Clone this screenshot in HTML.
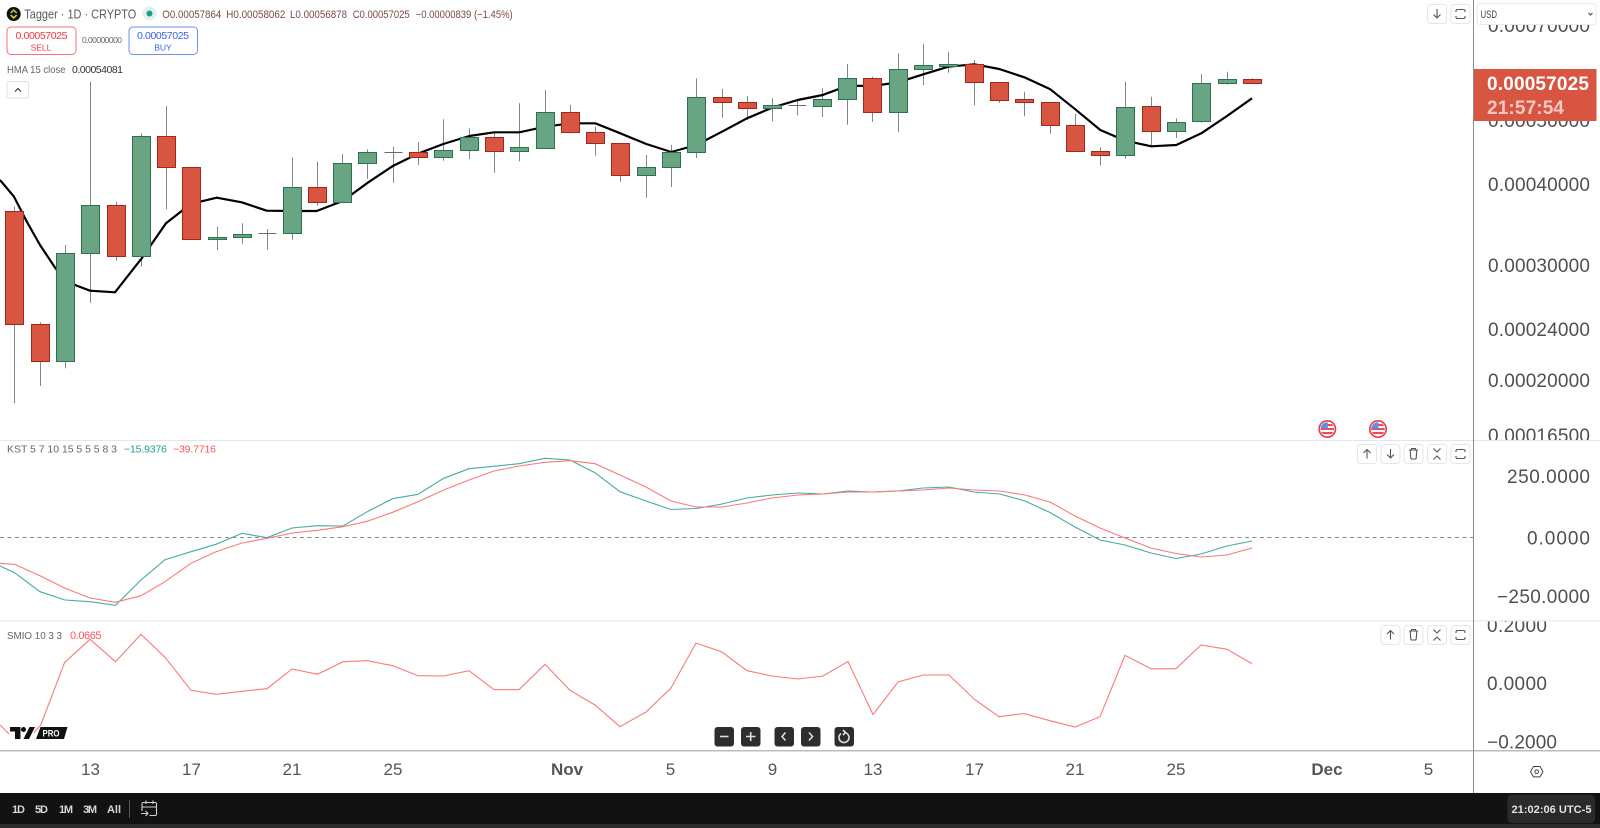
<!DOCTYPE html>
<html><head><meta charset="utf-8"><title>Tagger 1D</title>
<style>
html,body{margin:0;padding:0;background:#fff;width:1600px;height:828px;overflow:hidden}
svg{display:block;font-family:"Liberation Sans",sans-serif}
.w{stroke:#858585;stroke-width:1;fill:none}
.g rect{fill:#6aa583;stroke:#2a7350;stroke-width:1}
.r rect{fill:#d85542;stroke:#a3261b;stroke-width:1}
.ax{font-size:19px;fill:#505050}
.t{font-size:17px;fill:#555;text-anchor:middle}
.o{font-size:11px;fill:#7c4a44}
.ic{fill:none;stroke:#555;stroke-width:1.1}
.bb{fill:#fff;stroke:#e6e6e6;stroke-width:1}
.bt{font-size:11px;fill:#d6d6d6;font-weight:bold}
.nb{fill:#2d2d2d}
.ni{fill:none;stroke:#ddd;stroke-width:1.6}
</style></head><body>
<svg width="1600" height="828" viewBox="0 0 1600 828" xmlns="http://www.w3.org/2000/svg">
<defs>
<clipPath id="c1"><rect x="1474" y="25" width="126" height="415"/></clipPath>
<clipPath id="c2"><rect x="1474" y="441" width="126" height="179"/></clipPath>
<clipPath id="c3"><rect x="1474" y="621" width="126" height="129"/></clipPath>
<clipPath id="fl"><circle cx="0" cy="0" r="6.8"/></clipPath>
<g id="up"><rect class="bb" x=".5" y=".5" width="19" height="19" rx="3"/><path class="ic" d="M10 14.5V5.5M6.5 9L10 5.5 13.5 9"/></g>
<g id="dn"><rect class="bb" x=".5" y=".5" width="19" height="19" rx="3"/><path class="ic" d="M10 5V14M6.5 10.5L10 14l3.5-3.5"/></g>
<g id="tr"><rect class="bb" x=".5" y=".5" width="19" height="19" rx="3"/><path class="ic" d="M5.5 6h9M8 6V4.5h4V6M6.7 6l.6 8a1 1 0 0 0 1 1h3.4a1 1 0 0 0 1-1l.6-8"/></g>
<g id="co"><rect class="bb" x=".5" y=".5" width="19" height="19" rx="3"/><path class="ic" d="M6.5 4.5L10 8l3.5-3.5M6.5 15.5L10 12l3.5 3.5"/></g>
<g id="fs"><rect class="bb" x=".5" y=".5" width="19" height="19" rx="3"/><path class="ic" d="M5.5 8V7a1.5 1.5 0 0 1 1.5-1.5h6A1.5 1.5 0 0 1 14.500 7v1M5.500 12v1A1.500 1.500 0 0 0 7 14.500h6a1.500 1.500 0 0 0 1.500-1.500v-1"/></g>
<g id="flag"><circle r="8.2" fill="#fff" stroke="#f0364a" stroke-width="1.6"/><g clip-path="url(#fl)"><rect x="-7" y="-7" width="14" height="14" fill="#fff"/><rect x="-7" y="-1" width="14" height="2" fill="#ef4a55"/><rect x="-7" y="3" width="14" height="2" fill="#ef4a55"/><rect x="0" y="-5" width="7" height="2" fill="#ef4a55"/><rect x="-7" y="-7" width="7.500" height="6.500" fill="#5b8fe8"/></g></g>
</defs>

<!-- axis labels -->
<g clip-path="url(#c1)" class="ax">
<text x="1488" y="32" textLength="102">0.00070000</text>
<text x="1488" y="127" textLength="102">0.00050000</text>
<text x="1488" y="191" textLength="102">0.00040000</text>
<text x="1488" y="272" textLength="102">0.00030000</text>
<text x="1488" y="336" textLength="102">0.00024000</text>
<text x="1488" y="387" textLength="102">0.00020000</text>
<text x="1488" y="442" textLength="102">0.00016500</text>
</g>
<g clip-path="url(#c2)" class="ax">
<text x="1507" y="483" textLength="83">250.0000</text>
<text x="1527" y="544.500" textLength="63">0.0000</text>
<text x="1497" y="603" textLength="93">−250.0000</text>
</g>
<g clip-path="url(#c3)" class="ax">
<text x="1487" y="632" textLength="60">0.2000</text>
<text x="1487" y="690" textLength="60">0.0000</text>
<text x="1487" y="748.500" textLength="70">−0.2000</text>
</g>

<!-- wicks -->
<path class="w" d="M14.500 206.700V403.300M40.500 322.300V386M65.500 245V368.300M90.500 81.700V302.700M116.500 201.700V260.700M141.500 133.300V266.700M166.500 106V209.300M217.500 226.700V250.300M242.500 223.300V243.700M267.500 229V249.700M292.500 157.300V239.700M317.500 161.700V205.700M342.500 154V203M367.500 149.300V178.700M393.500 146.700V182.700M418.500 142.300V165M443.500 119.300V160.700M469.500 128.300V159M494.500 131.700V172.700M519.500 103.300V161.300M545.500 90V148M570.500 105V133.300M595.500 126.700V155.700M620.500 143V182M646.500 155V197.700M671.500 145V187M696.500 78.300V158M722.500 89V117.700M747.500 96V120M772.500 98.300V121.300M797.500 99.300V115.300M822.500 88.300V117M847.500 64V124.700M872.500 76.700V122M898.500 53.300V132M923.500 44V85M948.500 52V72.700M974.500 60V105.300M999.500 82V103M1024.500 91.700V116.300M1050.500 102V133.700M1075.500 114V151M1100.500 147.300V165.300M1125.500 81.700V158.700M1151.500 96.700V146.700M1176.500 118.300V138M1201.500 74V122.700M1227.500 71.700V84.700M1252.500 78.300V83"/>
<path d="M258.500 233.500h18M384.500 152.500h18M788.500 105.500h18" stroke="#6b6b6b" stroke-width="1" fill="none"/>

<!-- HMA underneath -->
<polyline fill="none" stroke="#000" stroke-width="2.200" stroke-linejoin="round" points="0,180 14,196.700 27,222 40,245 56,269 75,285 90,290.700 115,292.300 141.700,258.300 166,223.300 183,210 200,201.700 216.700,197.700 241.700,202.300 266.700,210.700 291.700,211 316.700,211 342.700,201 368.300,182.300 393.300,165.700 418.300,153.500 443.300,144 469.300,136 494.300,132.300 519.300,132.300 545.300,126.700 570.300,123.300 595.300,123.300 620.300,133.300 646.300,144 671.300,152 696.300,145 722,131.700 747,118.300 772,107.700 797.700,100 822.700,95 847.700,85.700 872.700,86 898.300,82.300 923.300,74.300 948.300,66.700 974.300,64.300 999.300,69 1024.300,77.300 1050.300,89.300 1075.300,109.300 1100.300,130 1125.300,140.700 1151.300,146.300 1176.300,145 1201.300,133.300 1227,116 1252,98.300"/>

<!-- green bodies -->
<g class="g">
<rect x="56.500" y="253.500" width="18" height="108"/>
<rect x="81.500" y="205.500" width="18" height="48"/>
<rect x="132.500" y="136.500" width="18" height="120"/>
<rect x="208.500" y="237.500" width="18" height="2"/>
<rect x="233.500" y="234.500" width="18" height="3"/>
<rect x="283.500" y="187.500" width="18" height="46"/>
<rect x="333.500" y="163.500" width="18" height="39"/>
<rect x="358.500" y="152.500" width="18" height="11"/>
<rect x="434.500" y="150.500" width="18" height="7"/>
<rect x="460.500" y="137.500" width="18" height="13"/>
<rect x="510.500" y="147.500" width="18" height="4"/>
<rect x="536.500" y="112.500" width="18" height="36"/>
<rect x="637.500" y="167.500" width="18" height="8"/>
<rect x="662.500" y="152.500" width="18" height="15"/>
<rect x="687.500" y="97.500" width="18" height="55"/>
<rect x="763.500" y="105.500" width="18" height="3"/>
<rect x="813.500" y="99.500" width="18" height="7"/>
<rect x="838.500" y="78.500" width="18" height="21"/>
<rect x="889.500" y="69.500" width="18" height="43"/>
<rect x="914.500" y="65.500" width="18" height="4"/>
<rect x="939.500" y="64.500" width="18" height="2"/>
<rect x="1116.500" y="107.500" width="18" height="48"/>
<rect x="1167.500" y="122.500" width="18" height="9"/>
<rect x="1192.500" y="83.500" width="18" height="38"/>
<rect x="1218.500" y="79.500" width="18" height="4"/>
</g>
<!-- red bodies -->
<g class="r">
<rect x="5.500" y="211.500" width="18" height="113"/>
<rect x="31.500" y="324.500" width="18" height="37"/>
<rect x="107.500" y="205.500" width="18" height="51"/>
<rect x="157.500" y="136.500" width="18" height="31"/>
<rect x="182.500" y="167.500" width="18" height="72"/>
<rect x="308.500" y="187.500" width="18" height="15"/>
<rect x="409.500" y="152.500" width="18" height="5"/>
<rect x="485.500" y="137.500" width="18" height="14"/>
<rect x="561.500" y="112.500" width="18" height="20"/>
<rect x="586.500" y="132.500" width="18" height="11"/>
<rect x="611.500" y="143.500" width="18" height="32"/>
<rect x="713.500" y="97.500" width="18" height="5"/>
<rect x="738.500" y="102.500" width="18" height="6"/>
<rect x="863.500" y="78.500" width="18" height="34"/>
<rect x="965.500" y="64.500" width="18" height="18"/>
<rect x="990.500" y="82.500" width="18" height="18"/>
<rect x="1015.500" y="99.500" width="18" height="3"/>
<rect x="1041.500" y="102.500" width="18" height="23"/>
<rect x="1066.500" y="125.500" width="18" height="26"/>
<rect x="1091.500" y="151.500" width="18" height="4"/>
<rect x="1142.500" y="106.500" width="18" height="25"/>
<rect x="1243.500" y="79.500" width="18" height="4"/>
</g>

<!-- flags -->
<use href="#flag" x="1327.300" y="429"/>
<use href="#flag" x="1378" y="429"/>

<!-- pane lines -->
<rect x="0" y="440" width="1600" height="1" fill="#e6e6ea"/>
<rect x="0" y="620" width="1600" height="1.500" fill="#eeeef2"/>
<rect x="0" y="750" width="1600" height="1.500" fill="#bcbcbc"/>
<rect x="1473" y="0" width="1" height="793" fill="#8a8a8a"/>

<!-- KST -->
<path d="M0 537.500H1473" stroke="#8a8a8a" stroke-width="1" stroke-dasharray="4 3.500" fill="none"/>
<polyline fill="none" stroke="#45aca0" stroke-width="1.100" points="0,566 14.500,572.700 40,591.700 65,600 90,601.700 115.500,605.300 141,580 165,559.700 191,551.700 216,544.300 242,533.300 267,537.700 292,528 317.500,525.700 343,526 367.300,511.700 392.600,498.700 418,494.300 443.700,478.300 469,468.700 494,466.300 519,463.700 545,458.300 570,460 595,472.700 620,491.700 646,501 671,509.500 696,508.500 722,504 747,498 772,495 798,493 823,494 848,491 873,492 898,491 923,488 949,487 974,492 1000,494 1025,501 1050,512.500 1075,527 1100,540 1125,545 1151,553 1176,558.500 1201,554 1227,546 1252,541"/>
<polyline fill="none" stroke="#fb7a78" stroke-width="1.100" points="0,563.300 14.500,564.300 40,575.700 65,588.300 90,598 115.500,602.300 141,595.700 165,581.700 191,563.300 216,551.700 242,543 267,538.300 292,533 317.500,530.300 343,526.700 367.300,521.300 392.600,512.300 418,501.700 443.700,490 469,480 494,471 519,466 545,462.300 570,460.700 595,463.700 620,475 646,487 671,501 696,507 722,507 747,503 772,498 798,495 823,494 848,492 873,492 898,491 923,490 949,488 974,490 1000,491 1025,495 1050,502 1075,516 1100,528 1125,538 1151,548 1176,553.500 1201,557 1227,555 1252,548"/>

<!-- SMIO -->
<polyline fill="none" stroke="#fb7a78" stroke-width="1.100" points="0,725 9,734 33,734 40.800,725 64.500,662.700 90,639.300 115.500,661.700 141,634.300 165,657.300 191,690.300 216,694.300 242,691.300 267,688.700 292,669 317.500,674.300 343,661.700 367.300,660.700 392.600,665.700 418,675.700 443.700,676 469,670.700 494,689.700 519,689.700 545,664.300 570,690.300 595,705 620,726.700 646,712 671,688 696,643 722,652 747,670.700 772,676 798,679 823,676 848,661.500 873,714.600 898,682 923,675 949,675 974,699 999,716.700 1024,713.600 1050,720.700 1075,727 1100,716.700 1125,655.400 1151,668.700 1176,668.700 1201,645 1227,649.300 1252,663.600"/>
<rect x="9" y="726" width="25" height="14" fill="#fff"/>

<!-- TV logo -->
<path d="M10 727h10.500v12H15v-7.500h-5z" fill="#111"/><circle cx="23.500" cy="729.500" r="2.500" fill="#111"/><path d="M29.500 727h5.500l-6 12h-5.500z" fill="#111"/>
<path d="M40.500 727h27l-3.500 12H36z" fill="#111"/>
<text x="42.500" y="736.500" font-size="9" font-weight="bold" fill="#fff" textLength="17" lengthAdjust="spacingAndGlyphs">PRO</text>

<!-- Legend -->
<circle cx="13.700" cy="14" r="7" fill="#111"/><path d="M10 12.500l3.700-3.500 3.700 3.500-1.300 1-2.400-2.300-2.400 2.300z" fill="#9ecb3c"/><path d="M10 15.500l3.700 3.500 3.700-3.500-1.300-1-2.400 2.300-2.400-2.300z" fill="#e7c53b"/>
<text x="24.300" y="18.500" font-size="13" fill="#5a5a5a" textLength="112" lengthAdjust="spacingAndGlyphs">Tagger · 1D · CRYPTO</text>
<circle cx="149.500" cy="13.500" r="7" fill="#dff2ef"/><circle cx="149.500" cy="13.500" r="3" fill="#1f9d8b"/>
<text class="o" x="162.300" y="18" textLength="59" lengthAdjust="spacingAndGlyphs">O0.00057864</text>
<text class="o" x="226.300" y="18" textLength="59" lengthAdjust="spacingAndGlyphs">H0.00058062</text>
<text class="o" x="290" y="18" textLength="57" lengthAdjust="spacingAndGlyphs">L0.00056878</text>
<text class="o" x="352.700" y="18" textLength="57" lengthAdjust="spacingAndGlyphs">C0.00057025</text>
<text class="o" x="415.700" y="18" textLength="97" lengthAdjust="spacingAndGlyphs">−0.00000839 (−1.45%)</text>

<rect x="7" y="27" width="69" height="27.500" rx="4" fill="#fff" stroke="#f4717b"/>
<text x="41.500" y="39" font-size="10.500" fill="#f23645" text-anchor="middle" textLength="52">0.00057025</text>
<text x="41" y="50.500" font-size="8.500" fill="#f23645" text-anchor="middle">SELL</text>
<text x="82" y="43" font-size="8.500" fill="#666" textLength="40">0.00000000</text>
<rect x="129" y="27" width="68.500" height="27.500" rx="4" fill="#fff" stroke="#6f8ff5"/>
<text x="163" y="39" font-size="10.500" fill="#3a62e6" text-anchor="middle" textLength="52">0.00057025</text>
<text x="163" y="50.500" font-size="8.500" fill="#3a62e6" text-anchor="middle">BUY</text>
<text x="7" y="73" font-size="10.500" fill="#666" textLength="58.500" lengthAdjust="spacingAndGlyphs">HMA 15 close</text>
<text x="72" y="73" font-size="10.500" fill="#333" textLength="51">0.00054081</text>
<rect x="7" y="81.500" width="21.500" height="16.500" rx="2" fill="#fff" stroke="#e2e2e2"/>
<path d="M15 91.500l3-3 3 3" fill="none" stroke="#333" stroke-width="1.100"/>

<text x="7" y="449.500" font-size="10.500" fill="#666" textLength="110" dy="3">KST 5 7 10 15 5 5 5 8 3</text>
<text x="124" y="452.500" font-size="10.500" fill="#1f9d8b" textLength="43">−15.9376</text>
<text x="173" y="452.500" font-size="10.500" fill="#f9565e" textLength="43">−39.7716</text>
<text x="7" y="639" font-size="10.500" fill="#666" textLength="55" lengthAdjust="spacingAndGlyphs">SMIO 10 3 3</text>
<text x="70" y="639" font-size="11" fill="#f9565e" textLength="31.500">0.0665</text>

<!-- buttons -->
<use href="#dn" x="1427" y="4"/><use href="#fs" x="1450.500" y="4"/>
<use href="#up" x="1357" y="444"/><use href="#dn" x="1380.500" y="444"/><use href="#tr" x="1403.500" y="444"/><use href="#co" x="1427" y="444"/><use href="#fs" x="1450.500" y="444"/>
<use href="#up" x="1380.500" y="625"/><use href="#tr" x="1403.500" y="625"/><use href="#co" x="1427" y="625"/><use href="#fs" x="1450.500" y="625"/>

<!-- USD -->
<rect x="1477" y="3.500" width="119" height="21" rx="3" fill="#fff" stroke="#e8e8e8"/>
<text x="1480.500" y="18" font-size="11" fill="#444" textLength="16.500" lengthAdjust="spacingAndGlyphs">USD</text>
<path d="M1588.500 13l2 2 2-2" fill="none" stroke="#444" stroke-width="1.100"/>

<!-- Price label -->
<rect x="1474" y="69" width="122.500" height="52" fill="#d85542"/>
<text x="1487" y="90" font-size="19" fill="#fff" font-weight="bold" textLength="102">0.00057025</text>
<text x="1487" y="114" font-size="19" fill="#f8c9c1" font-weight="bold" textLength="77">21:57:54</text>

<!-- time axis -->
<text class="t" x="90.500" y="775">13</text><text class="t" x="191.500" y="775">17</text><text class="t" x="292" y="775">21</text><text class="t" x="393" y="775">25</text>
<text class="t" x="567" y="775" font-weight="bold">Nov</text>
<text class="t" x="670.500" y="775">5</text><text class="t" x="772.500" y="775">9</text><text class="t" x="873" y="775">13</text><text class="t" x="974.500" y="775">17</text><text class="t" x="1075" y="775">21</text><text class="t" x="1176" y="775">25</text>
<text class="t" x="1327" y="775" font-weight="bold">Dec</text><text class="t" x="1428.500" y="775">5</text>
<path d="M1533.500 766.500h6.500l3 5.200-3 5.200h-6.500l-3-5.200z" fill="none" stroke="#444" stroke-width="1"/><circle cx="1536.700" cy="771.700" r="1.800" fill="none" stroke="#444"/>

<!-- nav buttons -->
<rect class="nb" x="714.500" y="727" width="19.500" height="19.500" rx="3"/><path class="ni" d="M720 736.500h8.500"/>
<rect class="nb" x="741" y="727" width="19.500" height="19.500" rx="3"/><path class="ni" d="M746 736.500h9.500M750.700 732v9"/>
<rect class="nb" x="774.500" y="727" width="19.500" height="19.500" rx="3"/><path class="ni" d="M785.500 732.500l-3.500 4 3.500 4"/>
<rect class="nb" x="801" y="727" width="19.500" height="19.500" rx="3"/><path class="ni" d="M809 732.500l3.500 4-3.500 4"/>
<rect class="nb" x="834.500" y="727" width="19.500" height="19.500" rx="3"/><path class="ni" d="M841 733.500a5 5 0 1 0 3-1M843 730l2.500 2.500-2.500 2.500"/>

<!-- bottom bar -->
<rect x="0" y="793" width="1600" height="31" fill="#121212"/>
<rect x="0" y="824" width="1600" height="4" fill="#2b2b2b"/>
<text class="bt" x="12" y="813" textLength="13">1D</text>
<text class="bt" x="35" y="813" textLength="13">5D</text>
<text class="bt" x="59" y="813" textLength="14">1M</text>
<text class="bt" x="83" y="813" textLength="14">3M</text>
<text class="bt" x="107" y="813" textLength="14">All</text>
<rect x="129" y="800" width="1" height="18" fill="#555"/>
<path d="M146 800.500v3.500M153 800.500v3.500M142 807h14.500M142 811v-7a1.500 1.500 0 0 1 1.500-1.500h11.500a1.500 1.500 0 0 1 1.500 1.500v10a1.500 1.500 0 0 1-1.500 1.500h-5.500M141 813.500h7M145.500 811l2.500 2.500-2.500 2.500" fill="none" stroke="#d0d0d0" stroke-width="1.100"/>
<rect x="1507.500" y="795" width="87.500" height="28" rx="4" fill="#2a2a2a"/>
<text x="1511.500" y="813" font-size="11" font-weight="bold" fill="#e2e2e2" textLength="80" lengthAdjust="spacingAndGlyphs">21:02:06 UTC-5</text>
</svg>
</body></html>
